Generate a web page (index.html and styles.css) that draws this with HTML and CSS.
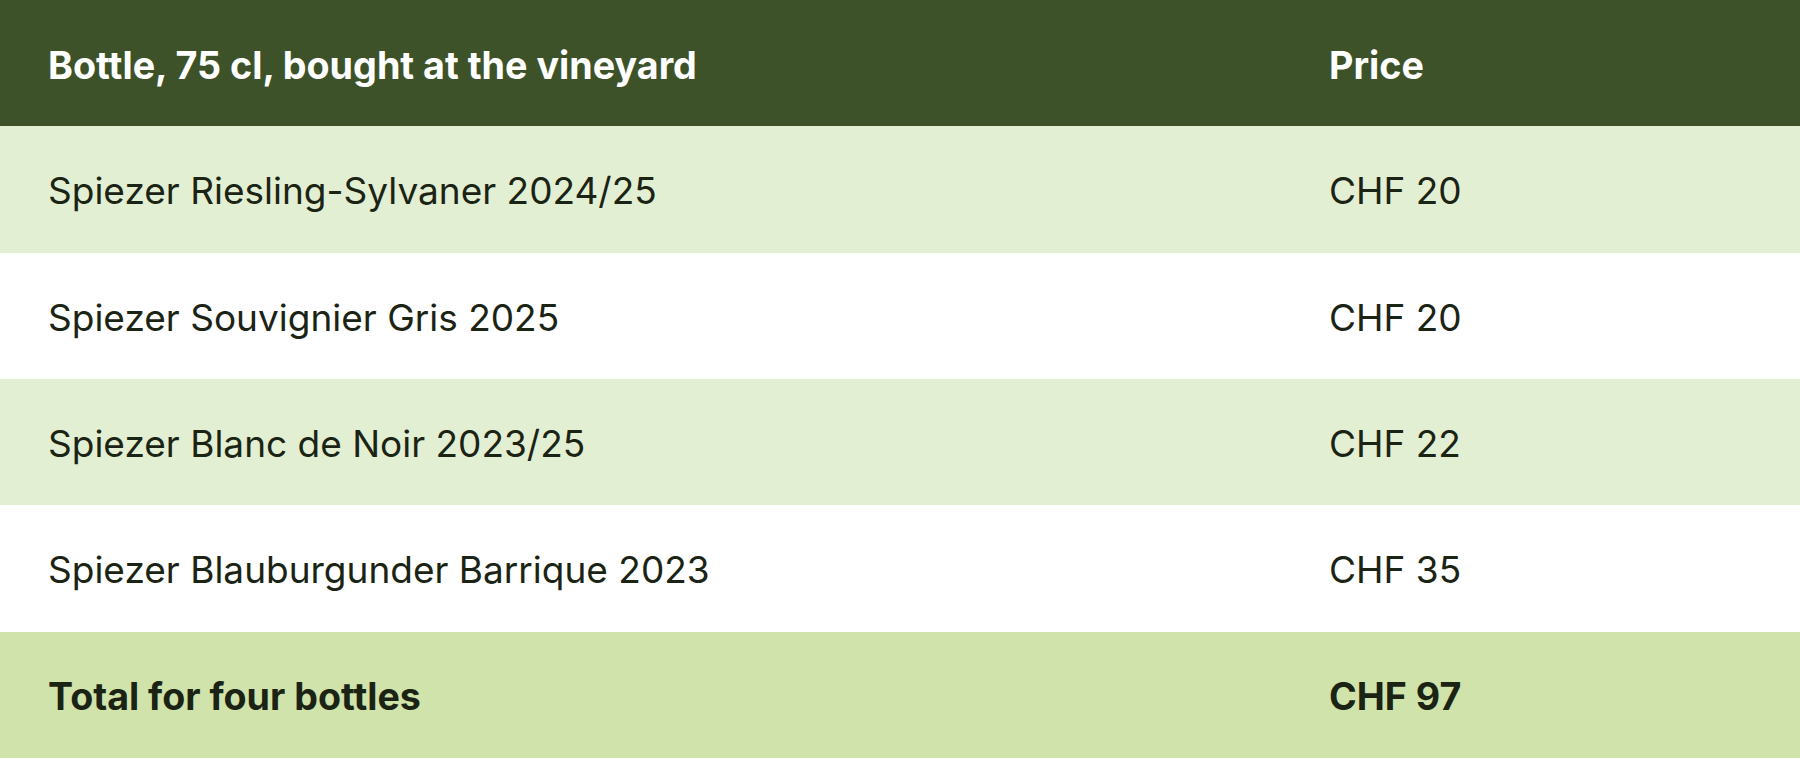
FILE: index.html
```html
<!DOCTYPE html>
<html lang="en">
<head>
<meta charset="utf-8">
<title>Wine prices</title>
<link rel="stylesheet" href="styles.css">
</head>
<body>
<table class="prices">
  <colgroup>
    <col class="col-name">
    <col class="col-price">
  </colgroup>
  <thead>
    <tr class="head">
      <th>Bottle, 75 cl, bought at the vineyard</th>
      <th>Price</th>
    </tr>
  </thead>
  <tbody>
    <tr class="odd">
      <td>Spiezer Riesling-Sylvaner 2024/25</td>
      <td>CHF 20</td>
    </tr>
    <tr class="even">
      <td>Spiezer Souvignier Gris 2025</td>
      <td>CHF 20</td>
    </tr>
    <tr class="odd">
      <td>Spiezer Blanc de Noir 2023/25</td>
      <td>CHF 22</td>
    </tr>
    <tr class="even">
      <td>Spiezer Blauburgunder Barrique 2023</td>
      <td>CHF 35</td>
    </tr>
  </tbody>
  <tfoot>
    <tr class="total">
      <td>Total for four bottles</td>
      <td>CHF 97</td>
    </tr>
  </tfoot>
</table>
</body>
</html>
```
FILE: styles.css
```css
html, body {
  margin: 0;
  padding: 0;
  background: #ffffff;
}
body {
  font-family: Inter, "Noto Sans", "DejaVu Sans", sans-serif;
  color: #1b2414;
}
.prices {
  width: 100%;
  border-collapse: collapse;
  table-layout: fixed;
}
.col-name { width: 1281px; }
.prices th,
.prices td {
  height: 126.33px;
  padding: 4px 48px 0;
  text-align: left;
  vertical-align: middle;
  font-size: 37px;
  line-height: 1.2;
  box-sizing: border-box;
}
.head {
  background: #3e5229;
}
.head th {
  color: #ffffff;
  font-weight: 700;
  font-size: 37.7px;
  padding-top: 5px;
}
.odd { background: #e3efd3; }
.even { background: #ffffff; }
.prices td { font-weight: 400; }
.total { background: #d0e3aa; }
.total td { font-weight: 700; font-size: 37.6px; }
```
